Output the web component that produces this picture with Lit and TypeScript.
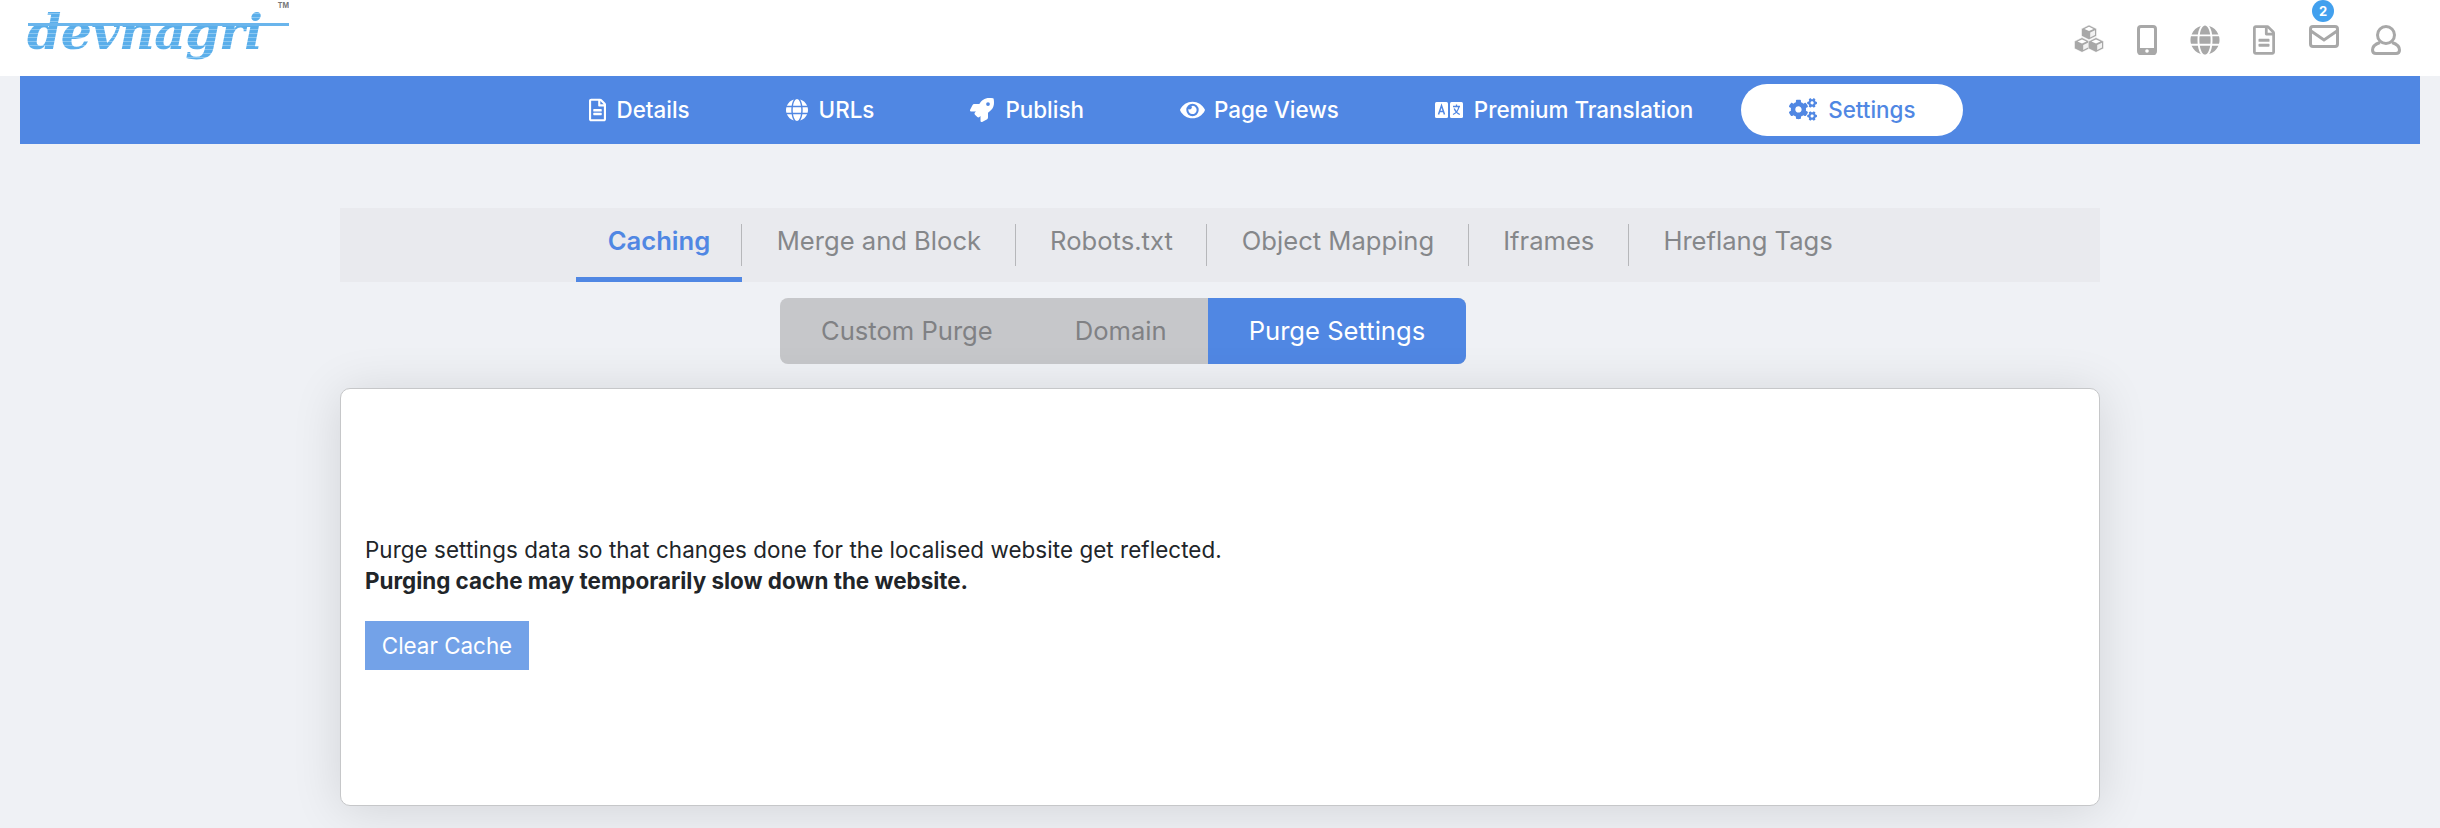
import { LitElement, html, css, svg } from "lit";
import { customElement } from "lit/decorators.js";

const GLOBE = "M336.5 160C322 70.7 287.8 8 248 8s-74 62.7-88.5 152h177zM152 256c0 22.2 1.2 43.5 3.3 64h185.3c2.1-20.5 3.3-41.8 3.3-64s-1.2-43.5-3.3-64H155.3c-2.1 20.5-3.3 41.8-3.3 64zm324.7-96c-28.6-67.9-86.5-120.4-158-141.6 24.4 33.8 41.2 84.7 50 141.6h108zM177.2 18.4C105.8 39.6 47.8 92.1 19.3 160h108c8.7-56.9 25.5-107.8 49.9-141.6zM487.4 192H372.7c2.1 21 3.3 42.5 3.3 64s-1.2 43-3.3 64h114.6c5.5-20.5 8.6-41.8 8.6-64s-3.1-43.5-8.5-64zM120 256c0-21.5 1.2-43 3.3-64H8.6C3.2 212.5 0 233.8 0 256s3.2 43.5 8.6 64h114.6c-2-21-3.2-42.5-3.2-64zm39.5 96c14.5 89.3 48.7 152 88.5 152s74-62.7 88.5-152h-177zm159.3 141.6c71.4-21.2 129.4-73.7 158-141.6h-108c-8.8 56.9-25.6 107.8-50 141.6zM19.3 352c28.6 67.9 86.5 120.4 158 141.6-24.4-33.8-41.2-84.7-50-141.6h-108z";
const FILE = "M288 248v28c0 6.6-5.4 12-12 12H108c-6.6 0-12-5.4-12-12v-28c0-6.6 5.4-12 12-12h168c6.6 0 12 5.4 12 12zm-12 72H108c-6.6 0-12 5.4-12 12v28c0 6.6 5.4 12 12 12h168c6.6 0 12-5.4 12-12v-28c0-6.6-5.4-12-12-12zm108-188.1V464c0 26.5-21.5 48-48 48H48c-26.5 0-48-21.5-48-48V48C0 21.5 21.5 0 48 0h204.1C264.8 0 277 5.1 286 14.1L369.9 98c9 8.9 14.1 21.2 14.1 33.9zm-128-80V128h76.1L256 51.9zM336 464V176H232c-13.3 0-24-10.7-24-24V48H48v416h288z";
const ROCKET = "M505.12 19.09c-1.19-5.53-6.66-11-12.21-12.18C460.72 0 435.51 0 410.41 0 307.18 0 245.27 55.2 199.05 128H94.84c-16.35.02-35.56 11.88-42.89 26.48L2.52 253.3A28.4 28.4 0 0 0 0 264a24 24 0 0 0 24.01 24h103.81l-22.47 22.47c-11.37 11.36-13 32.26 0 45.25l50.9 50.91c11.16 11.19 32.16 13.16 45.28 0l22.47-22.47V488a24 24 0 0 0 24.01 24 28.56 28.56 0 0 0 10.71-2.52l98.73-49.39c14.63-7.3 26.51-26.5 26.51-42.86V312.8c72.6-46.31 128.03-108.41 128.03-211.1.01-25.2.01-50.4-6.95-82.61zM384.04 168a40 40 0 1 1 40.01-40 40.02 40.02 0 0 1-40.01 40z";
const EYE = "M572.52 241.4C518.29 135.59 410.93 64 288 64S57.68 135.64 3.48 241.41a32.35 32.35 0 0 0 0 29.19C57.71 376.41 165.07 448 288 448s230.32-71.64 284.52-177.41a32.35 32.35 0 0 0 0-29.19zM288 400a144 144 0 1 1 144-144 143.93 143.93 0 0 1-144 144zm0-240a95.31 95.31 0 0 0-25.31 3.79 47.85 47.85 0 0 1-66.9 66.9A95.78 95.78 0 1 0 288 160z";
const COGS = "M512.1 191l-8.2 14.3c-3 5.3-9.4 7.5-15.1 5.4-11.8-4.4-22.6-10.7-32.1-18.6-4.6-3.8-5.8-10.5-2.8-15.7l8.2-14.3c-6.9-8-12.3-17.3-15.9-27.4h-16.5c-6 0-11.2-4.3-12.2-10.3-2-12-2.1-24.6 0-37.1 1-6 6.2-10.4 12.2-10.4h16.5c3.6-10.1 9-19.4 15.9-27.4l-8.2-14.3c-3-5.2-1.9-11.9 2.8-15.7 9.5-7.9 20.4-14.2 32.1-18.6 5.7-2.1 12.1.1 15.1 5.4l8.2 14.3c10.5-1.9 21.2-1.9 31.7 0L552 6.3c3-5.3 9.4-7.5 15.1-5.4 11.8 4.4 22.6 10.7 32.1 18.6 4.6 3.8 5.8 10.5 2.8 15.7l-8.2 14.3c6.9 8 12.3 17.3 15.9 27.4h16.5c6 0 11.2 4.3 12.2 10.3 2 12 2.1 24.6 0 37.1-1 6-6.2 10.4-12.2 10.4h-16.5c-3.6 10.1-9 19.4-15.9 27.4l8.2 14.3c3 5.2 1.9 11.9-2.8 15.7-9.5 7.9-20.4 14.2-32.1 18.6-5.7 2.1-12.1-.1-15.1-5.4l-8.2-14.3c-10.4 1.9-21.2 1.9-31.7 0zm-10.5-58.8c38.5 29.6 82.4-14.3 52.8-52.8-38.5-29.7-82.4 14.3-52.8 52.8zM386.3 286.1l33.7 16.8c10.1 5.8 14.5 18.1 10.5 29.1-8.9 24.2-26.4 46.4-42.6 65.8-7.4 8.9-20.2 11.1-30.3 5.3l-29.1-16.8c-16 13.7-34.6 24.6-54.9 31.7v33.6c0 11.6-8.3 21.6-19.7 23.6-24.6 4.2-50.4 4.4-75.9 0-11.5-2-20-11.9-20-23.6V418c-20.3-7.2-38.9-18-54.9-31.7L74 403c-10 5.8-22.9 3.6-30.3-5.3-16.2-19.4-33.3-41.6-42.2-65.7-4-10.9.4-23.2 10.5-29.1l33.3-16.8c-3.9-20.9-3.9-42.4 0-63.4L12 205.8c-10.1-5.8-14.6-18.1-10.5-29 8.9-24.2 26-46.4 42.2-65.8 7.4-8.9 20.2-11.1 30.3-5.3l29.1 16.8c16-13.7 34.6-24.6 54.9-31.7V57.1c0-11.5 8.2-21.5 19.6-23.5 24.6-4.2 50.5-4.4 76-.1 11.5 2 20 11.9 20 23.6v33.6c20.3 7.2 38.9 18 54.9 31.7l29.1-16.8c10-5.8 22.9-3.6 30.3 5.3 16.2 19.4 33.2 41.6 42.1 65.8 4 10.9.1 23.2-10 29.1l-33.7 16.8c3.9 21 3.9 42.5 0 63.5zm-117.6 21.1c59.2-77-28.7-164.9-105.7-105.7-59.2 77 28.7 164.9 105.7 105.7zm243.4 182.7l-8.2 14.3c-3 5.3-9.4 7.5-15.1 5.4-11.8-4.4-22.6-10.7-32.1-18.6-4.6-3.8-5.8-10.5-2.8-15.7l8.2-14.3c-6.9-8-12.3-17.3-15.9-27.4h-16.5c-6 0-11.2-4.3-12.2-10.3-2-12-2.1-24.6 0-37.1 1-6 6.2-10.4 12.2-10.4h16.5c3.6-10.1 9-19.4 15.9-27.4l-8.2-14.3c-3-5.2-1.9-11.9 2.8-15.7 9.5-7.9 20.4-14.2 32.1-18.6 5.7-2.1 12.1.1 15.1 5.4l8.2 14.3c10.5-1.9 21.2-1.9 31.7 0l8.2-14.3c3-5.3 9.4-7.5 15.1-5.4 11.8 4.4 22.6 10.7 32.1 18.6 4.6 3.8 5.8 10.5 2.8 15.7l-8.2 14.3c6.9 8 12.3 17.3 15.9 27.4h16.5c6 0 11.2 4.3 12.2 10.3 2 12 2.1 24.6 0 37.1-1 6-6.2 10.4-12.2 10.4h-16.5c-3.6 10.1-9 19.4-15.9 27.4l8.2 14.3c3 5.2 1.9 11.9-2.8 15.7-9.5 7.9-20.4 14.2-32.1 18.6-5.7 2.1-12.1-.1-15.1-5.4l-8.2-14.3c-10.4 1.9-21.2 1.9-31.7 0zM501.6 431c38.5 29.6 82.4-14.3 52.8-52.8-38.5-29.6-82.4 14.3-52.8 52.8z";

const solid = (vb: string, d: string, w: number, h: number) =>
  html`<svg viewBox=${vb} width=${w} height=${h} fill="currentColor"><path d=${d}></path></svg>`;

const langIcon = html`<svg viewBox="0 0 28 18" width="28" height="18">
  <rect x="0" y="1" width="13" height="16" rx="1.5" fill="currentColor"></rect>
  <rect x="15" y="1" width="13" height="16" rx="1.5" fill="currentColor"></rect>
  <path d="M3.5 13.5 6.5 4.5 9.5 13.5M4.6 10.5h3.8" fill="none" stroke="#5087e3" stroke-width="1.5"></path>
  <path d="M18 5.5h7M21.5 3.5v2M24 5.5c-.6 3.5-3 6.5-6 8M19.2 7.5c1 2.6 3 4.8 5.6 6" fill="none" stroke="#5087e3" stroke-width="1.3"></path>
</svg>`;

const cube = (x: number, y: number) => svg`
  <path d="M${x} ${y}l7.5 3.7V${y + 11}L${x} ${y + 14.7} ${x - 7.5} ${y + 11}V${y + 3.7}Z" fill="currentColor" stroke="#fff" stroke-width=".5"></path>
  <path d="M${x} ${y + 1.8}l4.5 2.1-4.5 2.1-4.5-2.1Z" fill="#fff"></path>
  <path d="M${x + 1.2} ${y + 7.5}l4.8-2.3v4.8l-4.8 2.4Z" fill="#fff" opacity=".85"></path>`;

@customElement("app-root")
export class AppRoot extends LitElement {
  static styles = css`
    :host {
      display: block;
      height: 828px;
      overflow: hidden;
      background: #eff1f5;
      font-family: Inter, "Liberation Sans", sans-serif;
      color: #212529;
    }
    .top {
      height: 76px;
      background: #fff;
      display: flex;
      justify-content: space-between;
      overflow: hidden;
    }
    .logo {
      position: relative;
      margin-left: 27px;
      width: 262px;
      height: 76px;
      overflow: hidden;
    }
    .logo-word {
      font-family: "DejaVu Serif", serif;
      font-style: italic;
      font-weight: 700;
      font-size: 49px;
      line-height: 76px;
      letter-spacing: -0.6px;
      color: transparent;
      background: repeating-linear-gradient(180deg, #5aaeea 0 3px, #8cc8f2 3px 4px);
      -webkit-background-clip: text;
      background-clip: text;
      display: inline-block;
      margin-top: -6px;
      white-space: nowrap;
      filter: blur(0.4px);
    }
    .logo-line {
      position: absolute;
      left: 1px;
      right: 0;
      top: 23px;
      height: 3px;
      background: #6ab5ec;
    }
    .tm {
      position: absolute;
      right: 0;
      top: 1px;
      font-size: 7px;
      font-weight: 700;
      color: #777;
    }
    .tools {
      display: flex;
      align-items: flex-start;
      color: #a8a8a8;
      padding: 25px 39px 0 0;
      gap: 33px;
    }
    .tools svg { display: block; }
    .mail { position: relative; margin-left: 1px; margin-right: -1px; }
    .badge {
      position: absolute;
      left: 3px;
      top: -25px;
      width: 22px;
      height: 22px;
      border-radius: 50%;
      background: #42a0ee;
      color: #fff;
      font-size: 13px;
      font-weight: 700;
      display: flex;
      align-items: center;
      justify-content: center;
    }
    .bar {
      margin: 0 20px;
      height: 68px;
      background: #5087e3;
      display: flex;
      align-items: center;
      justify-content: center;
      padding-left: 64px;
    }
    .nav {
      display: flex;
      align-items: center;
      gap: 11px;
      height: 52px;
      box-sizing: border-box;
      padding: 0 48px 1px;
      color: #fff;
      font-size: 22.4px;
      font-weight: 500;
      white-space: nowrap;
    }
    .nav.tight { gap: 9px; }
    .nav.active {
      background: #fff;
      color: #5087e3;
      border-radius: 26px;
    }
    .nav svg { display: block; }
    .main {
      padding: 64px 340px 0;
      display: flex;
      flex-direction: column;
    }
    .tabs {
      height: 74px;
      box-sizing: border-box;
      padding-left: 3px;
      background: #e9eaee;
      display: flex;
      justify-content: center;
    }
    .tab {
      display: flex;
      align-items: center;
      height: 74px;
      box-sizing: border-box;
      padding: 0 34.5px 9px;
      font-size: 25.6px;
      color: #85878a;
      position: relative;
      white-space: nowrap;
    }
    .tab + .tab::before {
      content: "";
      position: absolute;
      left: -1px;
      top: 16px;
      height: 42px;
      width: 1px;
      background: #b6b7ba;
    }
    .tab.active {
      color: #5087e3;
      font-weight: 600;
      border-bottom: 5px solid #5087e3;
      padding: 0 32px 4px;
    }
    .pills {
      display: flex;
      align-self: flex-start;
      margin: 16px 0 24px 440px;
      height: 66px;
      border-radius: 8px;
      overflow: hidden;
      background: #c6c7ca;
    }
    .pill {
      display: flex;
      align-items: center;
      padding: 0 41px 2px;
      font-size: 25.6px;
      color: #808184;
      white-space: nowrap;
    }
    .pill.active {
      background: #5087e3;
      color: #fff;
    }
    .card {
      height: 418px;
      box-sizing: border-box;
      background: #fff;
      border: 1.5px solid #c6c7c9;
      border-radius: 10px;
      box-shadow: 0 4px 50px rgba(0, 0, 0, 0.12);
      padding: 145px 24px 0;
    }
    .card p {
      margin: 0;
      font-size: 22.4px;
      line-height: 31px;
    }
    .card .lead { letter-spacing: 0.07px; }
    .card b { font-weight: 700; }
    .btn {
      margin-top: 25px;
      width: 164px;
      height: 49px;
      background: #73a2e8;
      color: #fff;
      font-size: 22.4px;
      display: flex;
      align-items: center;
      justify-content: center;
    }
  `;

  render() {
    const nav: [string, unknown, string][] = [
      ["Details", solid("0 0 384 512", FILE, 17, 24), ""],
      ["URLs", solid("0 0 496 512", GLOBE, 22, 24), ""],
      ["Publish", solid("0 0 512 512", ROCKET, 24, 24), ""],
      ["Page Views", solid("0 0 576 512", EYE, 25, 22), "tight"],
      ["Premium Translation", langIcon, ""],
      ["Settings", solid("0 0 640 512", COGS, 28, 23), "active"],
    ];
    const tabs = ["Caching", "Merge and Block", "Robots.txt", "Object Mapping", "Iframes", "Hreflang Tags"];
    const pills = ["Custom Purge", "Domain", "Purge Settings"];
    return html`
      <div class="top">
        <div class="logo">
          <span class="logo-word">devnagri</span>
          <span class="logo-line"></span>
          <span class="tm">TM</span>
        </div>
        <div class="tools">
          <svg viewBox="0 0 30 28" width="30" height="28">${cube(15, 0)}${cube(8, 12.6)}${cube(22, 12.6)}</svg>
          <svg viewBox="0 0 20 30" width="20" height="30">
            <rect x="1.5" y="1.5" width="17" height="27" rx="2.5" fill="none" stroke="currentColor" stroke-width="3"></rect>
            <path d="M1 23h18v5a2 2 0 0 1-2 2H3a2 2 0 0 1-2-2Z" fill="currentColor"></path>
            <circle cx="10" cy="26" r="1.8" fill="#fff"></circle>
          </svg>
          ${solid("0 0 496 512", GLOBE, 30, 30)}
          ${solid("0 0 384 512", FILE, 22, 30)}
          <div class="mail">
            <svg viewBox="0 0 30 23" width="30" height="23">
              <rect x="1.5" y="1.5" width="27" height="20" rx="2.5" fill="none" stroke="currentColor" stroke-width="3"></rect>
              <path d="M2 6 15 15 28 6" fill="none" stroke="currentColor" stroke-width="3"></path>
            </svg>
            <span class="badge">2</span>
          </div>
          <svg viewBox="0 0 30 30" width="30" height="30" fill="none" stroke="currentColor" stroke-width="3">
            <circle cx="15" cy="10" r="8.5"></circle>
            <path d="M9 17.5C4.5 19 1.5 21.5 1.5 25c0 2.5 1.5 3.5 3.5 3.5h20c2 0 3.5-1 3.5-3.5 0-3.5-3-6-7.5-7.5"></path>
          </svg>
        </div>
      </div>
      <div class="bar">
        ${nav.map(([t, i, c]) => html`<div class="nav ${c}">${i}<span>${t}</span></div>`)}
      </div>
      <div class="main">
        <div class="tabs">
          ${tabs.map((t, i) => html`<div class="tab ${i === 0 ? "active" : ""}">${t}</div>`)}
        </div>
        <div class="pills">
          ${pills.map((t, i) => html`<div class="pill ${i === 2 ? "active" : ""}">${t}</div>`)}
        </div>
        <div class="card">
          <p class="lead">Purge settings data so that changes done for the localised website get reflected.</p>
          <p><b>Purging cache may temporarily slow down the website.</b></p>
          <div class="btn">Clear Cache</div>
        </div>
      </div>
    `;
  }
}
